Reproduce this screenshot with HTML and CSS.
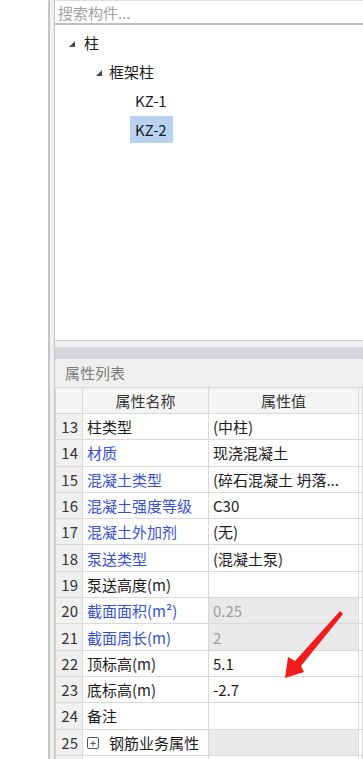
FILE: index.html
```html
<!DOCTYPE html>
<html lang="zh-CN">
<head>
  <meta charset="UTF-8" />
  <meta name="viewport" content="width=device-width, initial-scale=1.0" />
  <title>构件列表 - 属性列表</title>
  <link rel="stylesheet" href="styles.css">
</head>
<body>

<div class="app">
  <div class="side"></div>
  <div class="gutter"></div>

  <div class="main">
    <div class="search">搜索构件...</div>

    <div class="tree">
      <div class="tree-item lv0"><span class="caret"></span><span class="label">柱</span></div>
      <div class="tree-item lv1"><span class="caret"></span><span class="label">框架柱</span></div>
      <div class="tree-item lv2"><span class="label">KZ-1</span></div>
      <div class="tree-item lv2"><span class="label selected">KZ-2</span></div>
    </div>

    <div class="splitter"></div>
    <div class="split-bar"></div>
    <div class="panel-title">属性列表</div>

    <table class="props">
      <colgroup>
        <col class="c-num">
        <col class="c-name">
        <col class="c-value">
        <col>
      </colgroup>
      <thead>
        <tr>
          <th></th>
          <th>属性名称</th>
          <th>属性值</th>
          <th></th>
        </tr>
      </thead>
      <tbody>
        <tr><td class="num">13</td><td>柱类型</td><td>(中柱)</td><td></td></tr>
        <tr><td class="num">14</td><td class="link">材质</td><td>现浇混凝土</td><td></td></tr>
        <tr><td class="num">15</td><td class="link">混凝土类型</td><td>(碎石混凝土 坍落...</td><td></td></tr>
        <tr><td class="num">16</td><td class="link">混凝土强度等级</td><td>C30</td><td></td></tr>
        <tr><td class="num">17</td><td class="link">混凝土外加剂</td><td>(无)</td><td></td></tr>
        <tr><td class="num">18</td><td class="link">泵送类型</td><td>(混凝土泵)</td><td></td></tr>
        <tr><td class="num">19</td><td>泵送高度(m)</td><td></td><td></td></tr>
        <tr><td class="num">20</td><td class="link">截面面积(m²)</td><td class="readonly">0.25</td><td></td></tr>
        <tr><td class="num">21</td><td class="link">截面周长(m)</td><td class="readonly">2</td><td></td></tr>
        <tr><td class="num">22</td><td>顶标高(m)</td><td>5.1</td><td></td></tr>
        <tr><td class="num">23</td><td>底标高(m)</td><td>-2.7</td><td></td></tr>
        <tr><td class="num">24</td><td>备注</td><td></td><td></td></tr>
        <tr><td class="num">25</td><td><span class="plus-box">+</span>钢筋业务属性</td><td class="readonly"></td><td></td></tr>
        <tr><td class="num"></td><td></td><td></td><td></td></tr>
      </tbody>
    </table>
  </div>
</div>

<svg class="arrow" width="363" height="759" viewBox="0 0 363 759">
  <polygon points="285,678 288,657 295,661 340,611 343,614 301,666 304,672" fill="#f21c1c" />
</svg>

</body>
</html>
```

FILE: styles.css
```css
body {
  font-family: "Noto Sans CJK SC", "Noto Sans", sans-serif;
  font-size: 15px;
  color: #1c1c1c;
  background-color: white;
  margin: 0;
  padding: 0;
  overflow: hidden;
}

.app {
  display: flex;
  height: 759px;
  overflow: hidden;
}

.side {
  width: 48px;
  flex-shrink: 0;
  border-right: 2px solid #c6c6c6;
  background: white;
}

.gutter {
  width: 4px;
  flex-shrink: 0;
  background: #f0f0f0;
}

.main {
  flex: 1;
  border-left: 1px solid #c4c4c4;
  display: flex;
  flex-direction: column;
  min-width: 0;
  overflow: hidden;
}

.main > * {
  flex-shrink: 0;
}

.search {
  height: 22px;
  line-height: 24px;
  border-top: 1px solid #dedede;
  border-bottom: 2px solid #bfbfbf;
  padding-left: 3px;
  color: #a2a2a2;
}

.tree {
  height: 312px;
  padding-top: 3px;
  border-bottom: 1px solid #cfcfcf;
}

.tree-item {
  height: 29px;
  display: flex;
  align-items: center;
}

.tree-item.lv0 {
  padding-left: 14px;
}

.tree-item.lv1 {
  padding-left: 41px;
}

.tree-item.lv2 {
  padding-left: 75px;
}

.caret {
  width: 0;
  height: 0;
  border-left: 6px solid transparent;
  border-bottom: 6px solid #4a4a4a;
  margin-right: 9px;
  margin-top: 2px;
}

.tree-item.lv1 .caret {
  margin-right: 7px;
}

.label {
  line-height: 27px;
  padding: 0 5px 0 0;
}

.tree-item.lv2 .label {
  padding: 0 6px 0 5px;
}

.label.selected {
  background: #b9d2f0;
}

.splitter {
  height: 6px;
  background: #f0f0f0;
}

.split-bar {
  height: 12px;
  background: #d5d7db;
}

.panel-title {
  height: 28px;
  line-height: 28px;
  background: #efefef;
  color: #7c7c7c;
  padding-left: 10px;
}

.props {
  border-collapse: collapse;
  table-layout: fixed;
  width: 100%;
}

.c-num {
  width: 27px;
}

.c-name {
  width: 126px;
}

.c-value {
  width: 150px;
}

.props th,
.props td {
  border: 1px solid #d9d9d9;
  height: 25.3px;
  padding: 0 0 0 4px;
  white-space: nowrap;
  overflow: hidden;
  font-weight: normal;
}

.props th {
  height: 25px;
  background: #f5f5f5;
  color: #333;
  text-align: center;
  padding: 0;
}

.props td.num {
  background: #f0f0f0;
  color: #333;
  text-align: right;
  padding: 0 4px 0 0;
}

.props td.link {
  color: #3651d9;
}

.props td.readonly {
  background: #e9e9e9;
  color: #a0a0a0;
}

.plus-box {
  display: inline-block;
  width: 10px;
  height: 10px;
  border: 1px solid #555;
  border-radius: 2px;
  font-size: 11px;
  line-height: 10px;
  text-align: center;
  color: #333;
  margin-right: 10px;
  vertical-align: 1px;
}

.arrow {
  position: absolute;
  top: 0;
  left: 0;
  pointer-events: none;
}
```
